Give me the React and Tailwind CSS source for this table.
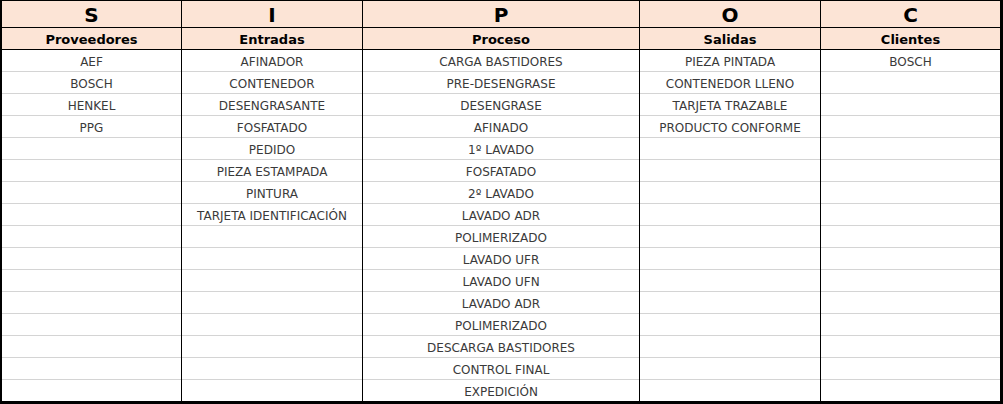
import React from "react";

const cols = [
  { letter: "S", title: "Proveedores", w: "w-[180px]", items: ["AEF", "BOSCH", "HENKEL", "PPG"] },
  {
    letter: "I",
    title: "Entradas",
    w: "w-[181px]",
    items: ["AFINADOR", "CONTENEDOR", "DESENGRASANTE", "FOSFATADO", "PEDIDO", "PIEZA ESTAMPADA", "PINTURA", "TARJETA IDENTIFICACIÓN"],
  },
  {
    letter: "P",
    title: "Proceso",
    w: "w-[277px]",
    items: [
      "CARGA BASTIDORES",
      "PRE-DESENGRASE",
      "DESENGRASE",
      "AFINADO",
      "1º LAVADO",
      "FOSFATADO",
      "2º LAVADO",
      "LAVADO ADR",
      "POLIMERIZADO",
      "LAVADO UFR",
      "LAVADO UFN",
      "LAVADO ADR",
      "POLIMERIZADO",
      "DESCARGA BASTIDORES",
      "CONTROL FINAL",
      "EXPEDICIÓN",
    ],
  },
  { letter: "O", title: "Salidas", w: "w-[181px]", items: ["PIEZA PINTADA", "CONTENEDOR LLENO", "TARJETA TRAZABLE", "PRODUCTO CONFORME"] },
  { letter: "C", title: "Clientes", w: "w-[179px]", items: ["BOSCH"], last: true },
];

export default function App() {
  return (
    <div
      className="w-[1003px] h-[404px] bg-white box-border border-black border-t border-l-2 border-r-[3px] border-b-[3px] flex"
      style={{ fontFamily: '"DejaVu Sans", sans-serif' }}
    >
      {cols.map((c, ci) => (
        <div key={ci} className={`${c.w} flex flex-col shrink-0 box-border ${c.last ? "" : "border-r border-black"}`}>
          <div className="h-[27px] box-border border-b border-black bg-[#fce4d6] flex items-center justify-center pt-[2px] text-[20px] font-bold text-black leading-none">
            {c.letter}
          </div>
          <div className="h-[22px] box-border border-b border-black bg-[#fce4d6] flex items-center justify-center pt-[1px] text-[13px] font-bold text-black leading-none">
            {c.title}
          </div>
          {Array.from({ length: 16 }).map((_, ri) => (
            <div
              key={ri}
              className={`${ri === 15 ? "h-[21px]" : "h-[22px] border-b border-[#d4d4d4]"} box-border flex items-center justify-center pt-[2px] text-[12px] text-[#3a3a3a] leading-none whitespace-nowrap`}
            >
              {c.items[ri] || ""}
            </div>
          ))}
        </div>
      ))}
    </div>
  );
}
